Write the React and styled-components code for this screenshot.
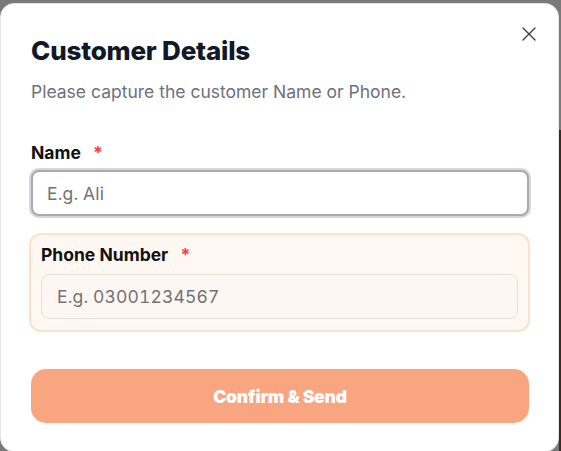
import React from "react";
import styled, { createGlobalStyle } from "styled-components";
import { X } from "lucide-react";

const GlobalStyle = createGlobalStyle`
  * {
    box-sizing: border-box;
  }

  html,
  body {
    margin: 0;
    height: 100%;
    overflow: hidden;
  }

  body {
    font-family: "Inter", "Noto Sans", sans-serif;
    background:
      linear-gradient(#7a7a7a, #7a7a7a) top / 100% 130px no-repeat,
      linear-gradient(to right, #7a7a7a 559px, #3d2a1c 559px);
  }
`;

function CustomerDetails() {
  return (
    <Modal>
      <CloseButton aria-label="Close">
        <X size={24} strokeWidth={1.4} />
      </CloseButton>

      <Title>Customer Details</Title>
      <Subtitle>Please capture the customer Name or Phone.</Subtitle>

      <Field>
        <Label>
          Name <Required>*</Required>
        </Label>
        <Input placeholder="E.g. Ali" $focused autoFocus />
      </Field>

      <Highlight>
        <Label $tight>
          Phone Number <Required>*</Required>
        </Label>
        <Input placeholder="E.g. 03001234567" $soft />
      </Highlight>

      <SubmitButton>Confirm &amp; Send</SubmitButton>
    </Modal>
  );
}

export default function App() {
  return (
    <>
      <GlobalStyle />
      <CustomerDetails />
    </>
  );
}

const Modal = styled.div`
  position: relative;
  display: flex;
  flex-direction: column;
  width: 559px;
  height: 449px;
  margin-top: 3px;
  padding: 31px 29px 28px 30px;
  background-color: #ffffff;
  border: 1px solid #e4e4e7;
  border-radius: 14px;
`;

const CloseButton = styled.button`
  position: absolute;
  top: 18px;
  right: 17px;
  display: flex;
  padding: 0;
  border: none;
  background: none;
  color: #3f3f46;
  cursor: pointer;
`;

const Title = styled.h2`
  margin: 0;
  font-size: 26px;
  line-height: 32px;
  font-weight: 800;
  color: #111827;
  letter-spacing: -0.2px;
`;

const Subtitle = styled.p`
  margin: 13px 0 0;
  font-size: 17.5px;
  line-height: 24px;
  color: #6b7280;
`;

const Field = styled.div`
  display: flex;
  flex-direction: column;
  margin-top: 37px;
`;

const Label = styled.label`
  display: block;
  font-size: 17.5px;
  line-height: ${(p) => (p.$tight ? "20px" : "24px")};
  font-weight: 700;
  color: #111111;
  margin-bottom: ${(p) => (p.$tight ? "9px" : "5px")};
`;

const Required = styled.span`
  margin-left: 8px;
  color: #ef4444;
`;

const Input = styled.input`
  width: 100%;
  height: ${(p) => (p.$soft ? "45px" : "46px")};
  padding: 0 ${(p) => (p.$soft ? "15px" : "14px")};
  font-family: inherit;
  font-size: 17.5px;
  font-variant-numeric: tabular-nums;
  letter-spacing: 0.15px;
  color: #111827;
  background-color: ${(p) => (p.$soft ? "#fdf6f2" : "#ffffff")};
  border: ${(p) => (p.$soft ? "1px solid #e8e1dc" : "2px solid #a9a9b2")};
  border-radius: 8px;
  box-shadow: ${(p) => (p.$focused ? "0 0 0 2px #d6d6dc" : "none")};
  outline: none;
  caret-color: #111111;

  &::placeholder {
    color: #737373;
  }
`;

const Highlight = styled.div`
  display: flex;
  flex-direction: column;
  margin: 17px -1px 0 -2px;
  padding: 10px 10px 11px 10px;
  background-color: #fff7f2;
  border: 2px solid #fde1cd;
  border-radius: 12px;
`;

const SubmitButton = styled.button`
  margin-top: 37px;
  height: 54px;
  width: 100%;
  border: none;
  border-radius: 15px;
  background-color: #f9a57f;
  color: #ffffff;
  font-family: inherit;
  font-size: 17.5px;
  font-weight: 900;
  letter-spacing: -0.2px;
  cursor: pointer;
`;
